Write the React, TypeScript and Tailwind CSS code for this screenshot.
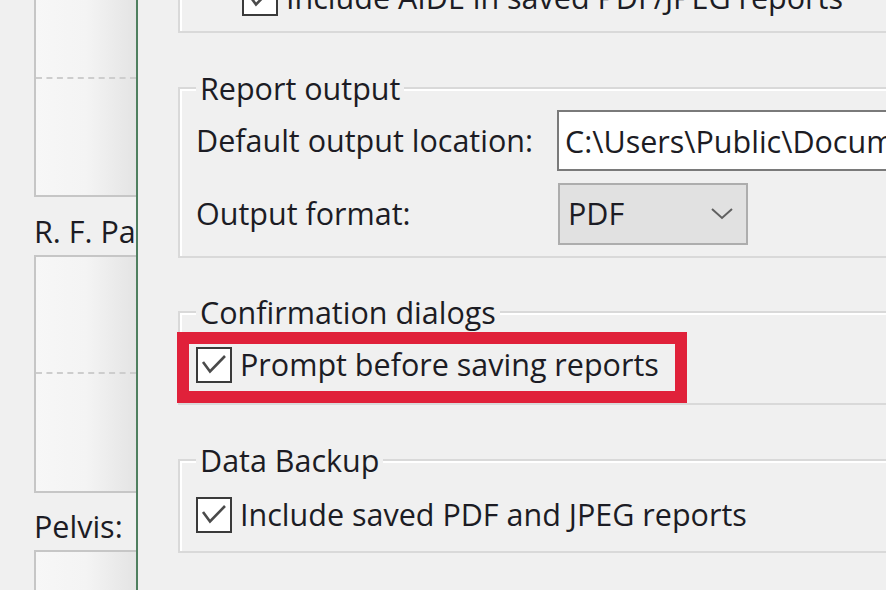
import React from "react";

function CheckBox() {
  return (
    <div className="w-[36px] h-[36px] shrink-0 border-2 border-[#3a3a3a] bg-white">
      <svg viewBox="0 0 32 32" className="w-full h-full">
        <path d="M5 13 L12 22.5 L27 7" fill="none" stroke="#4a4a4a" strokeWidth="2.6" />
      </svg>
    </div>
  );
}

function Group({ title, className, children }: { title: string; className: string; children: React.ReactNode }) {
  return (
    <fieldset className={`w-[760px] border-2 border-[#d9d9d9] shadow-[inset_2px_2px_0_#ffffff] pl-[16px] ${className}`}>
      <legend className="px-[4px] leading-[42px] bg-[#f0f0f0]">{title}</legend>
      {children}
    </fieldset>
  );
}

function SideBox({ height, top, className }: { height: string; top: string; className: string }) {
  return (
    <div className={`${height} ${className} shrink-0 flex flex-col border-2 border-r-0 border-[#c6c6c6] bg-gradient-to-r from-[#f7f7f7] via-[#f4f4f4] to-[#e4e4e4]`}>
      <div className={`${top} shrink-0`} />
      <div className="border-t-2 border-dashed border-[#cdcdcd]" />
    </div>
  );
}

export default function App() {
  return (
    <div className="w-[886px] h-[590px] overflow-hidden flex bg-[#f0f0f0] text-[30.5px] text-[#1c1c24] [font-family:'Open_Sans',sans-serif]">
      {/* left side panel */}
      <div className="w-[136px] shrink-0 pl-[34px] flex flex-col overflow-hidden">
        <SideBox height="h-[217px]" top="h-[95px]" className="-mt-[20px]" />
        <div className="h-[58px] shrink-0 pt-[13px] leading-[42px] whitespace-nowrap">R. F. Pa</div>
        <SideBox height="h-[238px]" top="h-[115px]" className="" />
        <div className="h-[57px] shrink-0 pt-[12px] leading-[42px] whitespace-nowrap">Pelvis:</div>
        <SideBox height="h-[120px]" top="h-[200px]" className="" />
      </div>

      <div className="w-[2px] shrink-0 bg-[#4f7f5f]" />

      {/* options dialog */}
      <div className="flex-1 flex flex-col pl-[40px]">
        <div className="-mt-[60px] w-[760px] border-2 border-t-0 border-[#d9d9d9] shadow-[inset_2px_0_0_#ffffff] pt-[40px] pb-[15px] pl-[62px]">
          <div className="flex items-center h-[36px] gap-[8px] whitespace-nowrap">
            <CheckBox />
            <span>Include AIDE in saved PDF/JPEG reports</span>
          </div>
        </div>

        <Group title="Report output" className="mt-[34px] pt-[1px] pb-[11px]">
          <div className="flex items-center h-[61px]">
            <span className="w-[361px] shrink-0 whitespace-nowrap">Default output location:</span>
            <input
              readOnly
              value={"C:\\Users\\Public\\Documents\\Reports"}
              className="w-[400px] h-[61px] shrink-0 border-2 border-[#7a7a7a] bg-white px-[6px] text-[30.5px] text-[#1c1c24] outline-none"
            />
          </div>
          <div className="flex items-center h-[62px] mt-[12px]">
            <span className="w-[362px] shrink-0 whitespace-nowrap">Output format:</span>
            <div className="w-[190px] h-[62px] border-2 border-[#adadad] bg-[#e1e1e1] flex items-center justify-between pl-[8px] pr-[13px]">
              <span>PDF</span>
              <svg width="22" height="12" viewBox="0 0 22 12">
                <path d="M1 1 L11 10 L21 1" fill="none" stroke="#606060" strokeWidth="2" />
              </svg>
            </div>
          </div>
        </Group>

        <Group title="Confirmation dialogs" className="mt-[33px]">
          <div className="-ml-[19px] -mt-[1px] w-[510px] border-[12px] border-[#e0213a] pl-[7px] pt-[3px] pb-[8px]">
            <div className="flex items-center h-[36px] gap-[8px] whitespace-nowrap">
              <CheckBox />
              <span>Prompt before saving reports</span>
            </div>
          </div>
        </Group>

        <Group title="Data Backup" className="mt-[34px] pt-[16px] pb-[18px]">
          <div className="flex items-center h-[36px] gap-[8px] whitespace-nowrap">
            <CheckBox />
            <span>Include saved PDF and JPEG reports</span>
          </div>
        </Group>
      </div>
    </div>
  );
}
